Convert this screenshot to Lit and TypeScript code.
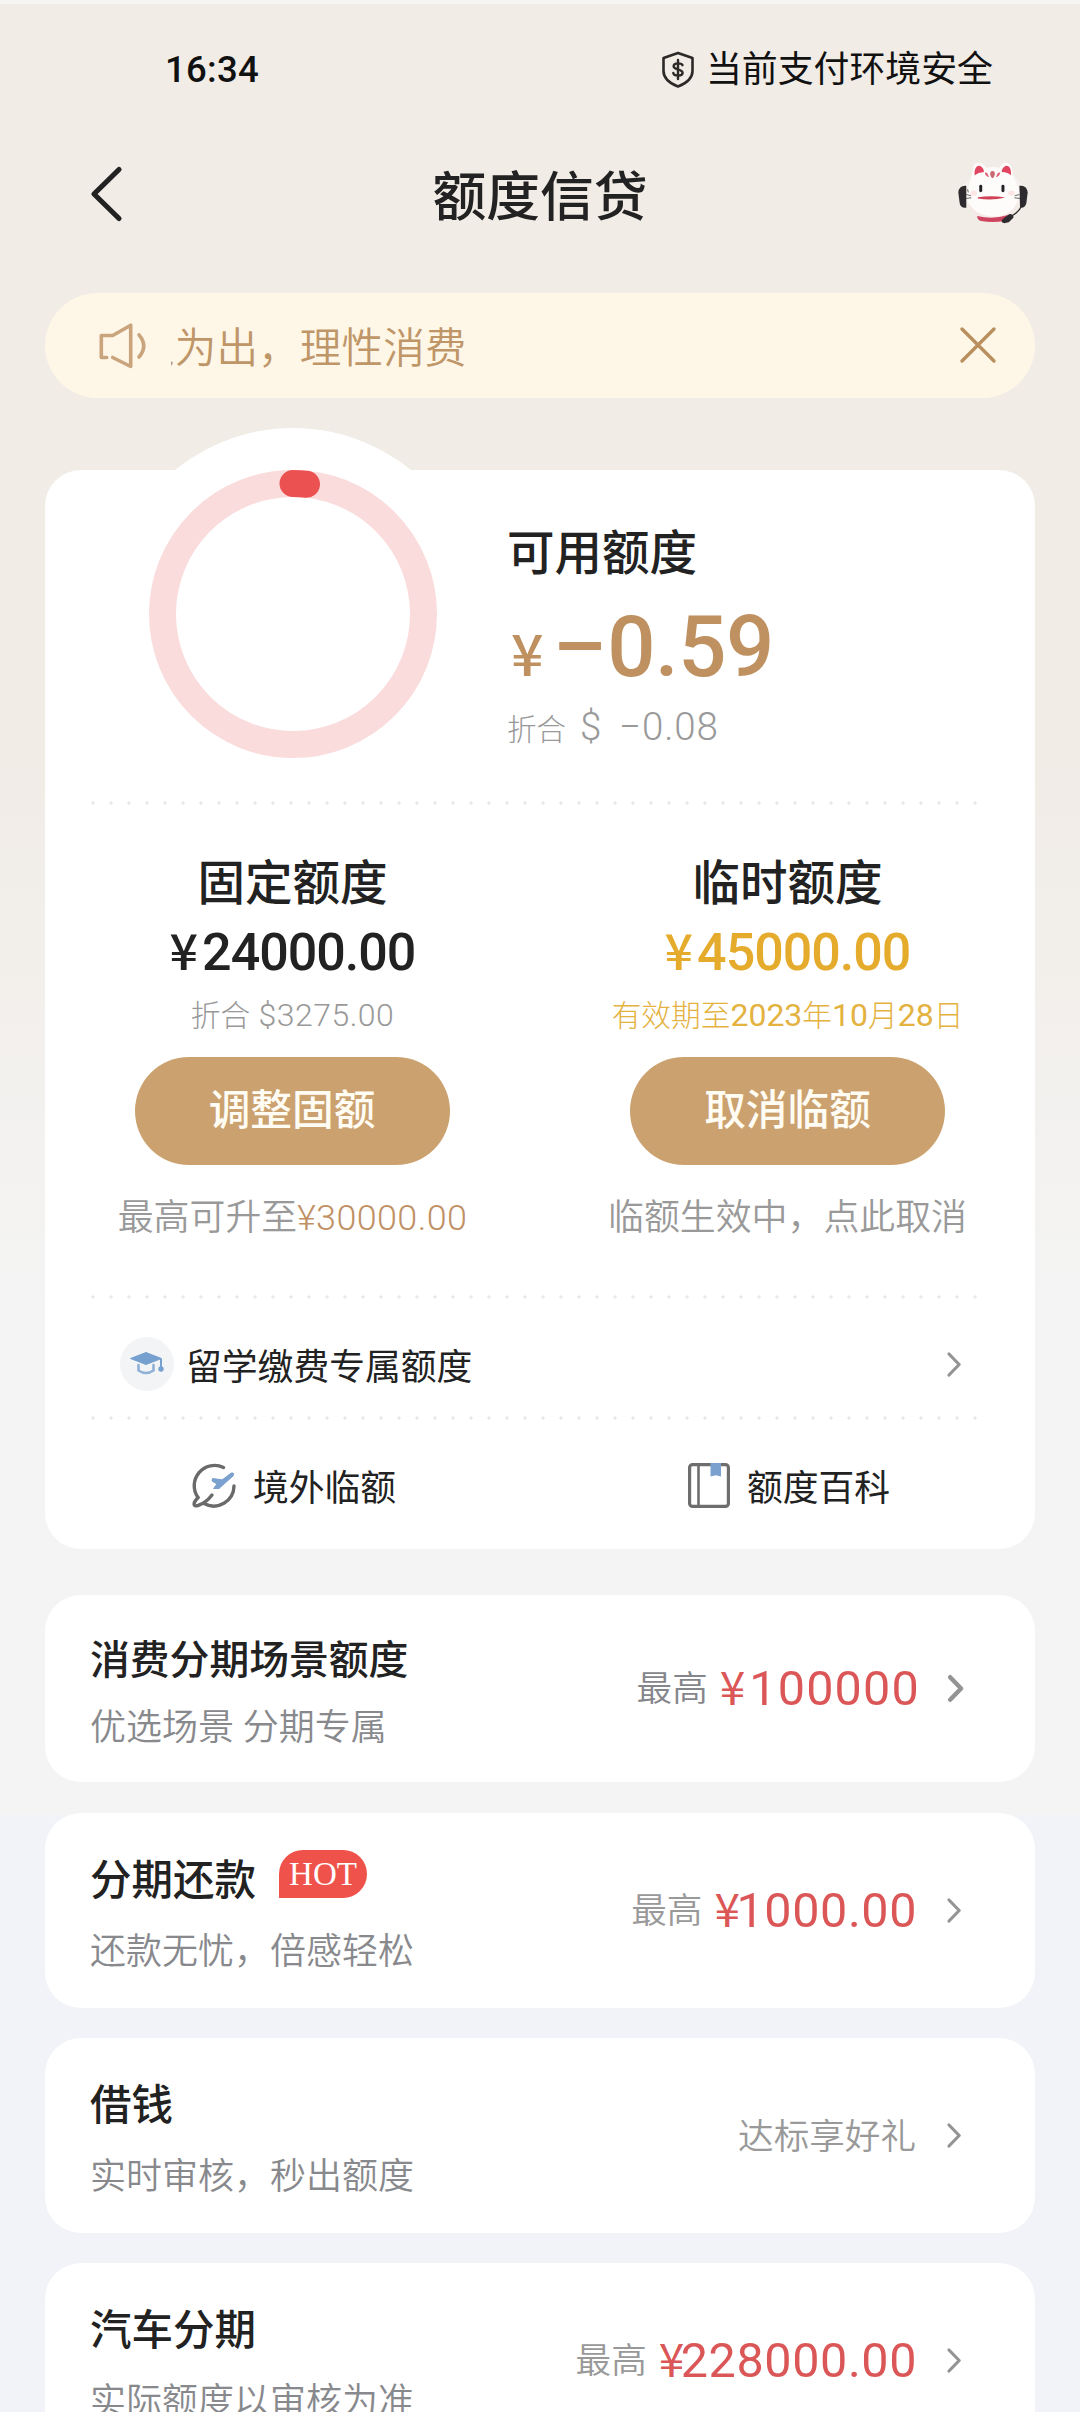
import { LitElement, html, css, svg, nothing } from "lit";
import { customElement, property } from "lit/decorators.js";

interface LimitColumn {
  title: string;
  amount: string;
  tone: string;
  sub: unknown;
  action: string;
  note: unknown;
}

interface Offer {
  title: string;
  desc: string;
  kind: string;
  badge?: string;
  label?: string;
  amount?: string;
  hint?: string;
}

const shieldIcon = svg`
  <path d="M17 2 L31.5 7 V20 C31.5 27 26 32 17 35.5 C8 32 2.500 27 2.500 20 V7 Z" fill="none" stroke="#2c2a28" stroke-width="2.600" stroke-linejoin="round"/>
  <path d="M21.500 14.200 C20.800 11.900 12.800 11.200 12.600 15.200 C12.500 19 21.700 17.600 21.600 21.800 C21.500 25.800 12.900 25.200 12.300 22 M17 9 V28" fill="none" stroke="#2c2a28" stroke-width="2.400" stroke-linecap="round"/>`;

const catIcon = svg`
  <path d="M66 140 Q160 30 246 134 L236 200 Q160 60 80 190 Z" fill="#f4f1ef"/>
  <path d="M78 138 Q56 136 54 158 L58 190 Q60 206 78 204 Z" fill="#2d2b2d"/>
  <path d="M238 138 Q260 134 263 158 L259 190 Q256 206 240 204 Z" fill="#2d2b2d"/>
  <path d="M84 146 C90 126 94 106 98 88 C100 66 122 60 138 84 Q158 78 178 84 C190 58 214 66 216 92 C220 112 228 130 236 148 C244 186 226 234 158 236 C92 234 70 184 84 146 Z" fill="#fefcfb"/>
  <path d="M86 186 C96 218 130 230 160 230 C196 230 224 214 234 180 C236 214 210 238 160 238 C112 238 86 216 86 186 Z" fill="#f6e8e6"/>
  <path d="M103 106 C102 84 110 76 120 78 C128 82 132 90 131 96 Q114 97 103 106 Z" fill="#e2455f"/>
  <path d="M213 106 C214 84 206 76 196 78 C188 82 184 90 185 96 Q204 97 213 106 Z" fill="#e2455f"/>
  <path d="M157 93 q8 0 7 11 q-2 10 -7 11 q-5 -1 -7 -11 q-1 -11 7 -11 Z" fill="#c76a72"/>
  <path d="M134 98 q9 -2 12 14 q-11 -3 -12 -14 Z M180 98 q-9 -2 -12 14 q11 -3 12 -14 Z" fill="#e0607a"/>
  <rect x="117" y="135" width="9" height="22" rx="4.500" fill="#262326"/>
  <rect x="184" y="135" width="9" height="22" rx="4.500" fill="#262326"/>
  <ellipse cx="100" cy="160" rx="10" ry="8" fill="#fbe6e4"/>
  <ellipse cx="214" cy="160" rx="10" ry="8" fill="#fbe6e4"/>
  <path d="M113 172 Q155 166 196 173 Q155 184 113 176 Z" fill="#cf4256"/>
  <path d="M78 164 L92 168 M76 176 L93 174 M82 148 L84 158 M238 164 L224 168 M240 176 L223 174" stroke="#4a4648" stroke-width="2.500" fill="none"/>
  <path d="M111 229 Q158 240 204 226 Q206 240 192 244 Q158 250 122 244 Q110 240 111 229 Z" fill="#cf4460"/>
  <path d="M246 196 Q238 216 216 228" stroke="#2d2b2d" stroke-width="4" fill="none"/>
  <path d="M188 238 L208 223 Q222 224 220 234 L206 248 Q186 254 184 245 Z" fill="#2d2b2d"/>`;

@customElement("chevron-right")
class ChevronRight extends LitElement {
  @property({ type: Boolean, reflect: true }) bold = false;

  static styles = css`
    :host { display: block; width: 14px; height: 25px; flex: none; }
    :host([bold]) { width: 15px; height: 27px; }
    svg { display: block; width: 100%; height: 100%; overflow: visible; }
  `;

  render() {
    return html`<svg viewBox="0 0 14 25" fill="none" stroke="#949494"
      stroke-width=${this.bold ? 4.2 : 3.2} stroke-linecap="round" stroke-linejoin="round">
      <path d="M2 2 L12.200 12.500 L2 23"/></svg>`;
  }
}

@customElement("offer-card")
class OfferCard extends LitElement {
  @property({ attribute: false }) offer!: Offer;

  static styles = css`
    :host { display: block; }
    .card {
      box-sizing: border-box;
      height: 195px;
      padding: 0 74px 0 45px;
      border-radius: 36px;
      background: #fff;
      display: flex;
      justify-content: space-between;
      align-items: center;
    }
    .scene { height: 187px; padding-right: 72px; margin-bottom: 1px; }
    .text { display: flex; flex-direction: column; gap: 22px; padding-top: 9px; }
    .scene .text { gap: 18px; padding-top: 8px; }
    .head { display: flex; height: 52px; align-items: center; }
    .title { font-size: 41.5px; font-weight: 500; line-height: 52px; color: #222; white-space: nowrap; }
    .scene .title { font-size: 39.8px; }
    .badge {
      box-sizing: border-box;
      width: 88px;
      height: 48px;
      margin: -14px 0 0 23px;
      border-radius: 26px 26px 26px 0;
      background: #ef524b;
      color: #fff;
      font: 33px/48px "Liberation Serif", serif;
      text-align: center;
    }
    .desc { font-size: 36px; line-height: 46px; font-weight: 350; color: #88898d; white-space: nowrap; }
    .side { display: flex; align-items: center; }
    .value { display: flex; align-items: center; margin-right: 31px; white-space: nowrap; line-height: 56px; }
    .scene .value { margin-right: 29px; }
    .label { font-size: 35.600px; font-weight: 350; color: #999; margin-right: 12px; }
    .scene .label { color: #85868b; }
    .amount { height: 56px; font-size: 48.500px; letter-spacing: 0.600px; margin-right: -1px; color: #db5757; }
    .scene .amount { letter-spacing: 1.200px; }
    .yen { font-family: "Noto Sans CJK SC", sans-serif; font-size: 46px; line-height: 0; letter-spacing: -3.500px; }
    .scene .yen { letter-spacing: 4px; }
    .hint { font-size: 35.600px; font-weight: 350; color: #999; margin-top: 3px; }
  `;

  render() {
    const o = this.offer;
    return html`
      <div class="card ${o.kind}">
        <div class="text">
          <div class="head">
            <span class="title">${o.title}</span>
            ${o.badge ? html`<span class="badge">${o.badge}</span>` : nothing}
          </div>
          <div class="desc">${o.desc}</div>
        </div>
        <div class="side">
          <div class="value">
            ${o.label ? html`<span class="label">${o.label}</span>` : nothing}
            ${o.amount ? html`<span class="amount"><span class="yen">¥</span>${o.amount}</span>` : nothing}
            ${o.hint ? html`<span class="hint">${o.hint}</span>` : nothing}
          </div>
          <chevron-right ?bold=${o.kind === "scene"}></chevron-right>
        </div>
      </div>`;
  }
}

@customElement("app-root")
class AppRoot extends LitElement {
  static styles = css`
    :host {
      display: block;
      font-family: Roboto, "Noto Sans CJK SC", sans-serif;
      color: #222;
    }
    svg { display: block; overflow: visible; flex: none; }
    .page {
      box-sizing: border-box;
      width: 1080px;
      height: 2412px;
      overflow: hidden;
      border-top: 4px solid #f7f5f3;
      background: linear-gradient(#f1ece6 0, #f1ece6 760px, #f4f4f4 1300px, #f4f4f4 1811px, #f2f3f8 1811px);
    }
    .status {
      box-sizing: border-box;
      height: 136px;
      padding: 0 87px 6px 165px;
      display: flex;
      justify-content: space-between;
      align-items: center;
      color: #111;
    }
    .time { font-size: 36.500px; font-weight: 500; letter-spacing: 0.300px; }
    .safe { display: flex; align-items: center; gap: 11px; font-size: 35.900px; line-height: 44px; }
    .safe-text { margin-top: 2px; }
    .nav {
      height: 116px;
      padding: 0 50px 0 91px;
      display: grid;
      grid-template-columns: 1fr auto 1fr;
      align-items: center;
    }
    .nav-title { font-size: 53.800px; font-weight: 500; line-height: 70px; margin-right: 41px; }
    .back { margin-bottom: 8px; }
    .cat { justify-self: end; margin-bottom: 13px; }
    .body { padding: 0 45px; }
    .notice {
      box-sizing: border-box;
      height: 105px;
      margin-top: 37px;
      padding: 0 39px 0 54px;
      border-radius: 53px;
      background: #fef7e8;
      display: flex;
      align-items: center;
    }
    .marquee {
      flex: 1;
      margin: 6px 0 0 24px;
      overflow: hidden;
      white-space: nowrap;
      font-size: 41.600px;
      line-height: 56px;
      font-weight: 350;
      color: #bf9668;
    }
    .scroll { display: block; margin-left: -38px; letter-spacing: 0.100px; }
    .close { margin-bottom: 2px; }
    .panel {
      height: 1079px;
      margin-top: 72px;
      border-radius: 36px;
      background: #fff;
      position: relative;
    }
    .bump {
      position: absolute;
      left: 62px;
      top: -42px;
      width: 372px;
      height: 372px;
      border-radius: 50%;
      background: #fff;
    }
    .overview { position: relative; height: 331px; display: flex; }
    .ring { margin-left: 104px; }
    .info { margin-left: 70px; padding-top: 52px; }
    .heading { font-size: 47.500px; font-weight: 500; line-height: 64px; }
    .avail { display: flex; align-items: baseline; height: 88px; margin-top: 17px; line-height: 88px; color: #bf9060; font-weight: 500; }
    .avail-yen { font: 500 57px/88px "Noto Sans CJK SC", sans-serif; width: 49px; margin-left: 4px; }
    .avail-num { font-size: 85px; letter-spacing: -0.500px; }
    .minus { display: inline-block; transform: scaleX(1.18); transform-origin: right; }
    .usd { display: flex; align-items: baseline; height: 48px; margin-top: 12px; line-height: 48px; color: #999; font-weight: 300; }
    .usd-label { font-size: 29.500px; width: 73px; }
    .usd-sign { font-size: 38.500px; width: 39px; }
    .usd-num { font-size: 38.500px; letter-spacing: 0.900px; }
    .dots {
      height: 4px;
      margin: 0 54px 0 46px;
      background: radial-gradient(circle at 2px 2px, #e8e8e8 1.200px, transparent 2.100px) 0 0 / 18px 4px;
    }
    .limits { display: grid; grid-template-columns: 1fr 1fr; height: 490px; }
    .col { display: flex; flex-direction: column; align-items: center; padding-top: 51px; white-space: nowrap; }
    .col-title { font-size: 47.500px; font-weight: 500; line-height: 56px; }
    .col-amount { height: 56px; margin-top: 13px; font-size: 52px; font-weight: 500; line-height: 56px; letter-spacing: -1.000px; }
    .col-yen { font-family: "Noto Sans CJK SC", sans-serif; font-size: 50px; line-height: 0; letter-spacing: 4px; }
    .gold .col-amount { color: #e5ab2c; }
    .gold .col-sub { color: #e3b23f; letter-spacing: 0; }
    .col-sub { height: 40px; margin-top: 14px; line-height: 40px; font-size: 32px; font-weight: 300; color: #999; letter-spacing: 0.500px; }
    .small { font-size: 29.700px; line-height: 0; letter-spacing: 0; }
    .num { font-weight: 400; }
    .btn {
      width: 315px;
      margin-top: 22px;
      border: 0;
      padding: 0;
      height: 108px;
      border-radius: 54px;
      background: #cba26f;
      color: #fffcf3;
      font: 500 41.700px/108px Roboto, "Noto Sans CJK SC", sans-serif;
    }
    .plain .btn { margin-right: 1px; }
    .note { height: 44px; margin-top: 31px; line-height: 44px; font-size: 35.900px; font-weight: 350; color: #999; }
    .raise { color: #c09064; letter-spacing: 0.400px; }
    .study { box-sizing: border-box; height: 117px; padding: 13px 74px 0 75px; display: flex; align-items: center; }
    .disc { width: 54px; height: 54px; border-radius: 50%; background: #f3f4f5; display: grid; place-items: center; }
    .study-text { flex: 1; margin: 7px 0 0 12px; font-size: 35.800px; line-height: 44px; }
    .links { display: grid; grid-template-columns: 1fr 1fr; height: 130px; }
    .link { display: flex; align-items: center; justify-content: center; gap: 17px; font-size: 35.800px; line-height: 44px; padding-left: 3px; }
    .link-text { margin-top: 8px; }
    .offers { display: flex; flex-direction: column; gap: 30px; margin-top: 46px; }
  `;

  private columns: LimitColumn[] = [
    {
      title: "固定额度",
      amount: "24000.00",
      tone: "plain",
      sub: html`<span class="small">折合</span> $3275.00`,
      action: "调整固额",
      note: html`最高可升至<span class="raise">¥30000.00</span>`,
    },
    {
      title: "临时额度",
      amount: "45000.00",
      tone: "gold",
      sub: html`<span class="small">有效期至</span><span class="num">2023</span><span class="small">年</span><span class="num">10</span><span class="small">月</span><span class="num">28</span><span class="small">日</span>`,
      action: "取消临额",
      note: "临额生效中，点此取消",
    },
  ];

  private offers: Offer[] = [
    { title: "消费分期场景额度", desc: "优选场景 分期专属", kind: "scene", label: "最高", amount: "100000" },
    { title: "分期还款", desc: "还款无忧，倍感轻松", kind: "plain", badge: "HOT", label: "最高", amount: "1000.00" },
    { title: "借钱", desc: "实时审核，秒出额度", kind: "plain", hint: "达标享好礼" },
    { title: "汽车分期", desc: "实际额度以审核为准", kind: "plain", label: "最高", amount: "228000.00" },
  ];

  render() {
    return html`
      <div class="page" lang="zh-CN">
        <div class="status">
          <span class="time">16:34</span>
          <div class="safe">
            <svg width="34" height="37" viewBox="0 0 34 37">${shieldIcon}</svg>
            <span class="safe-text">当前支付环境安全</span>
          </div>
        </div>

        <div class="nav">
          <svg class="back" width="32" height="56" viewBox="0 0 32 56" fill="none" stroke="#222" stroke-width="5.200" stroke-linecap="round" stroke-linejoin="round">
            <path d="M28 3.500 L3 28 L28 52.500"/>
          </svg>
          <span class="nav-title">额度信贷</span>
          <svg class="cat" width="73" height="67" viewBox="50 55 220 200">${catIcon}</svg>
        </div>

        <div class="body">
          <div class="notice">
            <svg width="48" height="46" viewBox="0 0 48 46" fill="none" stroke="#c9a47c" stroke-width="3.600" stroke-linecap="round" stroke-linejoin="round">
              <path d="M7.700 34.500 H2.300 V12.500 H13.700 L31.700 2.200 V43.500 L13.700 34.500"/>
              <path d="M40 11.800 Q49.500 22.900 40 34"/>
            </svg>
            <div class="marquee"><span class="scroll">入为出，理性消费</span></div>
            <svg class="close" width="36" height="36" viewBox="0 0 36 36" stroke="#b98f5e" stroke-width="3.400" stroke-linecap="round">
              <path d="M2 2 L34 34 M34 2 L2 34"/>
            </svg>
          </div>

          <div class="panel">
            <div class="bump"></div>
            <div class="overview">
              <svg class="ring" width="288" height="288" viewBox="0 0 288 288" fill="none" stroke-width="27">
                <circle cx="144" cy="144" r="130.500" stroke="#fadcdd"/>
                <path d="M144 13.500 A130.500 130.500 0 0 1 157.500 14.200" stroke="#ec5152" stroke-linecap="round"/>
              </svg>
              <div class="info">
                <div class="heading">可用额度</div>
                <div class="avail"><span class="avail-yen">¥</span><span class="avail-num"><span class="minus">−</span>0.59</span></div>
                <div class="usd"><span class="usd-label">折合</span><span class="usd-sign">$</span><span class="usd-num">−0.08</span></div>
              </div>
            </div>
            <div class="dots"></div>

            <div class="limits">
              ${this.columns.map(
                (c) => html`
                  <div class="col ${c.tone}">
                    <div class="col-title">${c.title}</div>
                    <div class="col-amount"><span class="col-yen">¥</span>${c.amount}</div>
                    <div class="col-sub">${c.sub}</div>
                    <button class="btn">${c.action}</button>
                    <div class="note">${c.note}</div>
                  </div>`
              )}
            </div>
            <div class="dots"></div>

            <div class="study">
              <div class="disc">
                <svg width="34" height="24" viewBox="0 0 34 24">
                  <path d="M0.500 6.500 L16 0.500 L31.500 6.500 L16 12.500 Z" fill="#76a0d0" stroke="#76a0d0" stroke-linejoin="round"/>
                  <path d="M8.500 13 V18.500 Q16 23.500 23.500 18.500 V13" fill="none" stroke="#8fb1d8" stroke-width="2.600" stroke-linecap="round"/>
                  <path d="M31 7 V16" stroke="#76a0d0" stroke-width="2" fill="none"/>
                  <circle cx="31" cy="17" r="2.700" fill="#76a0d0"/>
                </svg>
              </div>
              <span class="study-text">留学缴费专属额度</span>
              <chevron-right></chevron-right>
            </div>
            <div class="dots"></div>

            <div class="links">
              <div class="link">
                <svg width="44" height="45" viewBox="0 0 44 45" fill="none" stroke="#6a6a6a" stroke-width="3.400" stroke-linecap="round">
                  <path d="M31.500 4.500 A20.300 20.300 0 0 0 6 34.500"/>
                  <path d="M42 23 A20.300 20.300 0 0 1 12 40.500"/>
                  <path d="M6 34.500 C1 40 0.500 44 6 42.500 C11 41 16.500 36.500 20 32"/>
                  <path d="M39.500 10 Q43 9.500 41 13 L27 25.500 L21.500 25.500 L25 21 L20 18 L20.500 15.500 L30 16.800 Z" fill="#7ba1cf" stroke="#7ba1cf" stroke-width="1" stroke-linejoin="round"/>
                </svg>
                <span class="link-text">境外临额</span>
              </div>
              <div class="link">
                <svg width="42" height="45" viewBox="0 0 42 45" fill="none" stroke="#6e6e6e" stroke-width="3.200">
                  <rect x="1.600" y="1.600" width="38.800" height="41.800" rx="3"/>
                  <path d="M10.500 2 V43" stroke-width="2.600"/>
                  <path d="M22.500 0 H33 V13.500 L27.800 12.300 L22.500 13.500 Z" fill="#7ba1cf" stroke="none"/>
                </svg>
                <span class="link-text">额度百科</span>
              </div>
            </div>
          </div>

          <div class="offers">
            ${this.offers.map((o) => html`<offer-card .offer=${o}></offer-card>`)}
          </div>
        </div>
      </div>`;
  }
}
